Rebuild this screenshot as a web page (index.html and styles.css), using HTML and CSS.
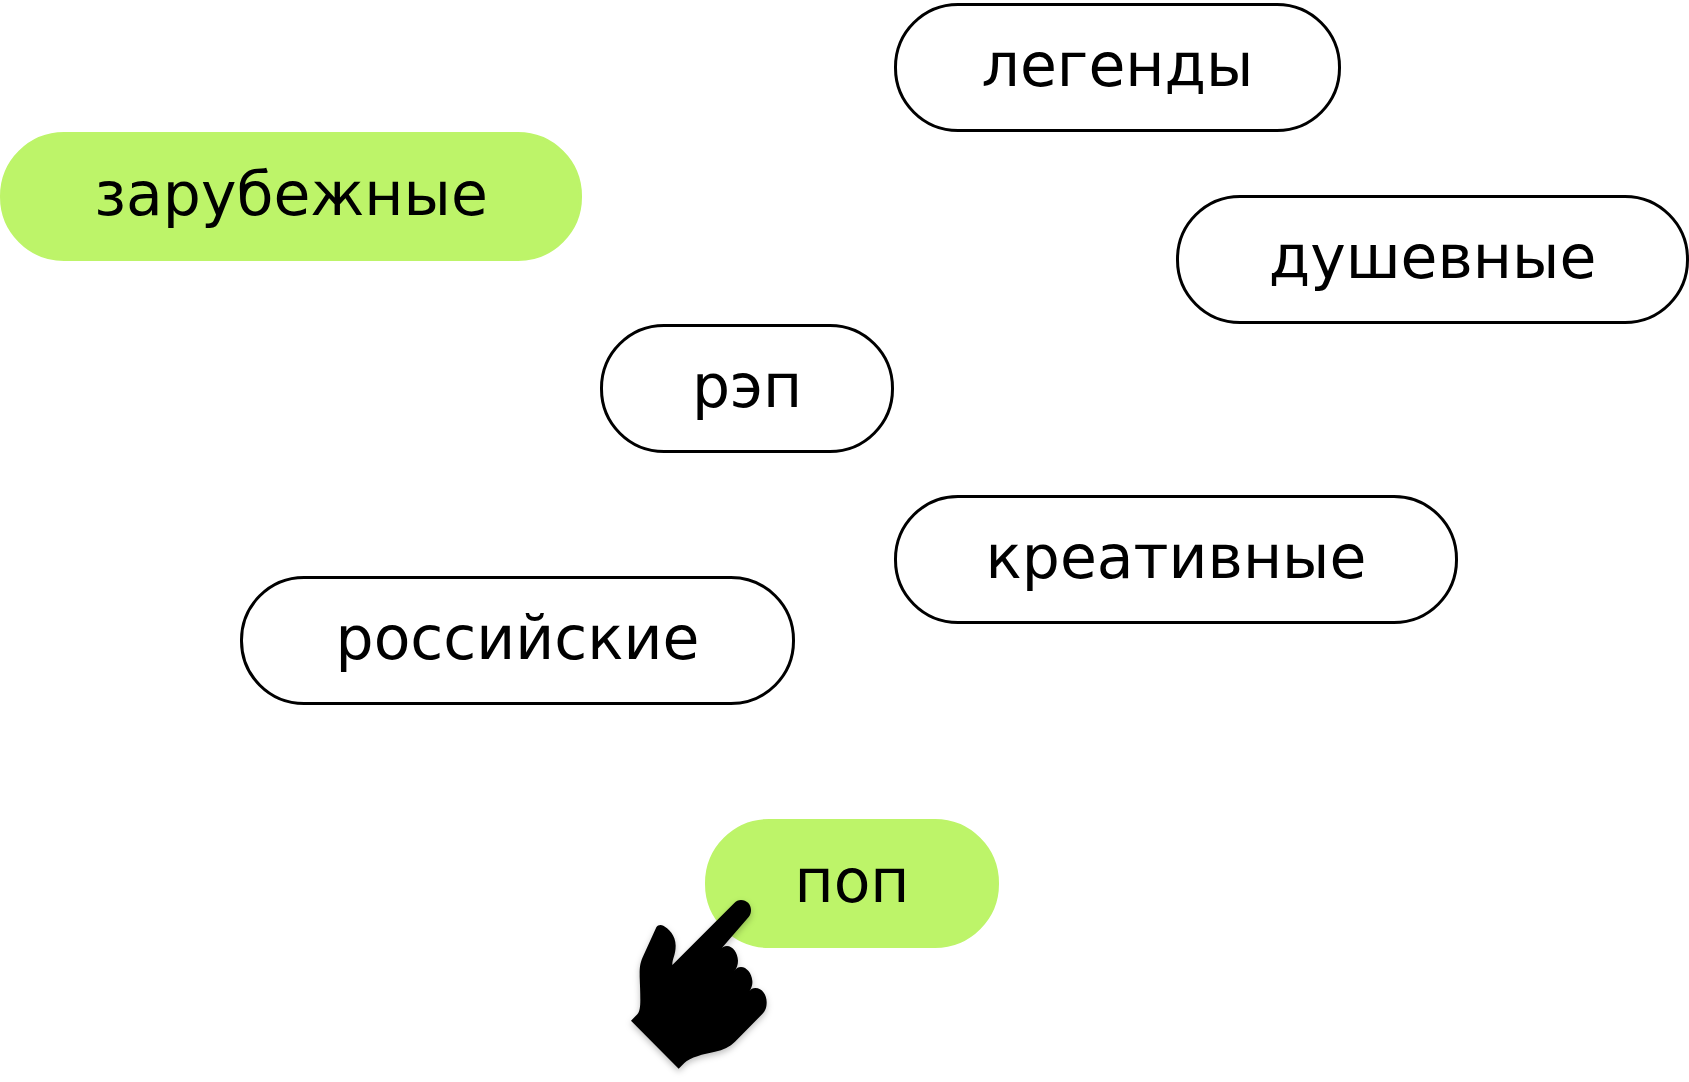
FILE: index.html
```html
<!DOCTYPE html>
<html lang="ru">
<head>
  <meta charset="utf-8">
  <meta name="viewport" content="width=device-width, initial-scale=1">
  <title>Жанры</title>
  <link rel="stylesheet" href="styles.css">
</head>
<body>
  <main class="tags">
    <button type="button" class="tag tag-legends" aria-pressed="false">легенды</button>
    <button type="button" class="tag tag-foreign" aria-pressed="true">зарубежные</button>
    <button type="button" class="tag tag-soulful" aria-pressed="false">душевные</button>
    <button type="button" class="tag tag-rap" aria-pressed="false">рэп</button>
    <button type="button" class="tag tag-creative" aria-pressed="false">креативные</button>
    <button type="button" class="tag tag-russian" aria-pressed="false">российские</button>
    <div class="pointed">
      <button type="button" class="tag" aria-pressed="true">поп</button>
      <svg class="hand" viewBox="75 285 450 555" aria-hidden="true">
        <path d="M217 495C217 475 227 465 227 437C227 405 205 385 190 377C182 373 173 375 169 382L128 472C118 495 119 510 119 530C120 560 121 575 121 600C121 620 119 635 112 643L93 662L236 806L253 789C270 772 310 762 345 755C370 750 390 740 405 725L487 642C497 632 500 622 500 607C500 585 487 564 466 564C458 564 452 568 449 573C456 560 458 552 457 542C455 520 440 501 423 501C414 501 408 505 403 514C410 505 414 495 414 482C413 458 398 438 381 438C372 438 367 442 361 449L446 351C451 345 453 338 453 330C453 313 440 300 423 300C415 300 408 304 403 309Z"/>
      </svg>
    </div>
  </main>
</body>
</html>
```
FILE: styles.css
```css
* {
  box-sizing: border-box;
}

body {
  margin: 0;
  background: #fff;
  color: #000;
}

/* Scattered tags share one proportional grid; their rows interlock. */
.tags {
  display: grid;
  grid-template-columns: 240fr 342fr 18fr 105fr 90fr 99fr 105fr 177fr 165fr 117fr 231fr;
  grid-template-rows: 129px 63px 66px 63px 129px 42px 81px 48px 81px 114px 129px;
  padding: 3px 0 132px;
}

.tag {
  display: flex;
  align-items: center;
  justify-content: center;
  min-width: 0;
  width: 100%;
  height: 100%;
  padding: 0 0 6px;
  border: 3px solid #000;
  border-radius: 64px;
  background: #fff;
  color: #000;
  font-family: "DejaVu Sans", sans-serif;
  font-size: 60px;
  line-height: 64px;
  cursor: pointer;
}

.tag[aria-pressed="true"] {
  border-color: #bdf469;
  background: #bdf469;
}

.tag-legends {
  grid-area: 1 / 7 / 2 / 10;
}

.tag-foreign {
  grid-area: 2 / 1 / 4 / 3;
}

.tag-soulful {
  grid-area: 3 / 9 / 5 / 12;
}

.tag-rap {
  grid-area: 5 / 4 / 6 / 7;
}

.tag-creative {
  grid-area: 7 / 7 / 9 / 11;
}

.tag-russian {
  grid-area: 8 / 2 / 10 / 6;
}

.pointed {
  grid-area: 11 / 5 / 12 / 8;
  position: relative;
}

.hand {
  position: absolute;
  left: -80px;
  top: 76px;
  width: 150px;
  height: 185px;
  pointer-events: none;
  filter: drop-shadow(0 3px 3px rgba(0, 0, 0, 0.25));
}
```
